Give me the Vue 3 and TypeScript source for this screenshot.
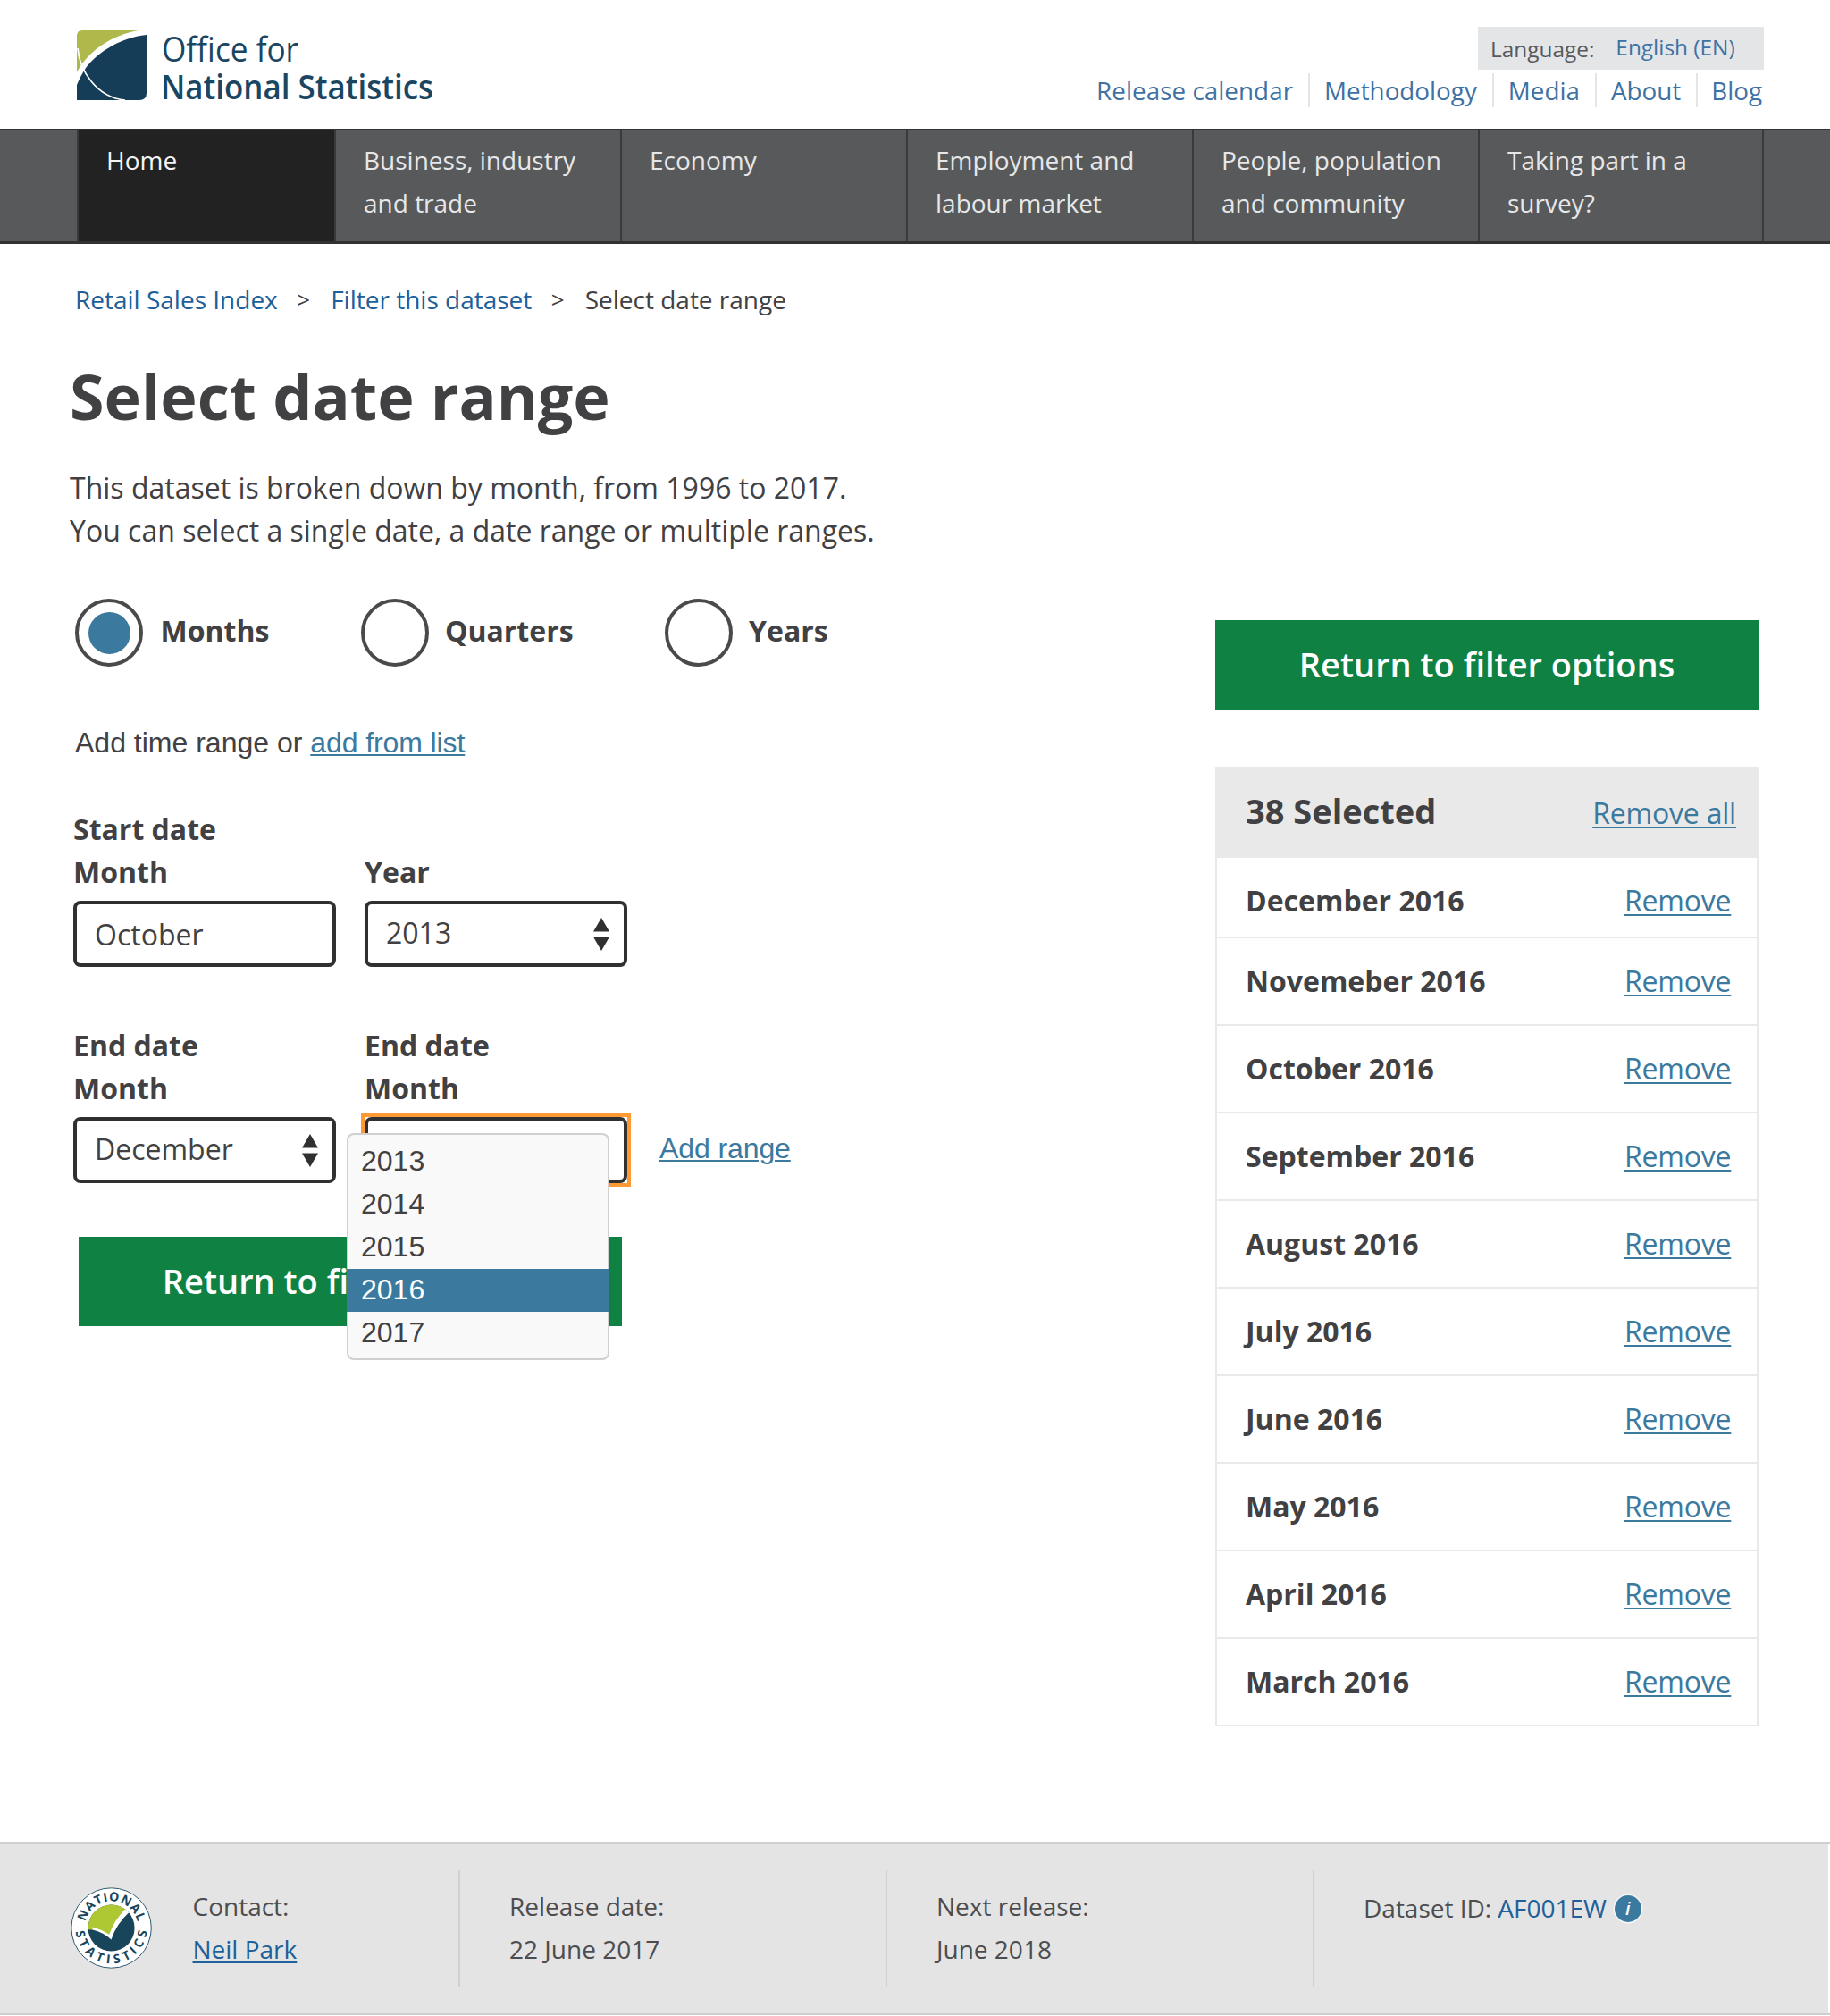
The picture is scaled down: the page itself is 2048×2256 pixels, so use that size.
<script setup lang="ts">
import { ref } from 'vue'

interface NavItem { lines: string[]; active?: boolean }

const navItems: NavItem[] = [
  { lines: ['Home'], active: true },
  { lines: ['Business, industry', 'and trade'] },
  { lines: ['Economy'] },
  { lines: ['Employment and', 'labour market'] },
  { lines: ['People, population', 'and community'] },
  { lines: ['Taking part in a', 'survey?'] },
]
const siteLinks: string[] = ['Release calendar', 'Methodology', 'Media', 'About', 'Blog']
const periods: string[] = ['Months', 'Quarters', 'Years']
const period = ref('Months')
const years: number[] = [2013, 2014, 2015, 2016, 2017]
const endYear = ref(2016)
const selected = ref<string[]>([
  'December 2016', 'Novemeber 2016', 'October 2016', 'September 2016', 'August 2016',
  'July 2016', 'June 2016', 'May 2016', 'April 2016', 'March 2016',
])
</script>

<template>
  <div class="page">
    <header class="masthead">
      <svg class="logo" width="404" height="84" viewBox="0 0 404 84">
        <path d="M0 46V6Q0 0 6 0H69C40 5 14 22 1 45Z" fill="#aeb84b" />
        <path d="M78 5C48 8 18 27 7 47C4 52 2 56 0 61V78H70Q78 78 78 70Z" fill="#163d57" />
        <path d="M1 20C3 45 22 75 54 78" fill="none" stroke="#fff" stroke-width="1.7" />
        <text x="95" y="34.500" font-size="39" font-weight="400" textLength="153" lengthAdjust="spacingAndGlyphs">Office for</text>
        <text x="94" y="77" font-size="38" font-weight="600" textLength="305" lengthAdjust="spacingAndGlyphs">National Statistics</text>
      </svg>
      <div class="tools">
        <div class="language"><span>Language:</span><a class="lang">English (EN)</a></div>
        <div class="site-links"><a v-for="l in siteLinks" :key="l">{{ l }}</a></div>
      </div>
    </header>

    <nav class="nav">
      <a v-for="item in navItems" :key="item.lines[0]" :class="{ active: item.active }">
        <span v-for="line in item.lines" :key="line">{{ line }}</span>
      </a>
    </nav>

    <main class="main">
      <section class="left">
        <div class="crumbs">
          <a>Retail Sales Index</a><i>&gt;</i><a>Filter this dataset</a><i>&gt;</i><span>Select date range</span>
        </div>
        <h1>Select date range</h1>
        <p class="intro">This dataset is broken down by month, from 1996 to 2017.<br>You can select a single date, a date range or multiple ranges.</p>

        <div class="radios">
          <label v-for="p in periods" :key="p" :class="p.toLowerCase()" @click="period = p">
            <span class="radio"><span v-if="p === period" class="dot"></span></span><b>{{ p }}</b>
          </label>
        </div>

        <p class="add">Add time range or <a>add from list</a></p>

        <div class="fields">
          <div class="field">
            <b>Start date</b><b>Month</b>
            <div class="box low"><span>October</span></div>
          </div>
          <div class="field">
            <b>Year</b>
            <div class="box"><span>2013</span>
              <svg class="arrows" width="18" height="38" viewBox="0 0 18 38"><path d="M9 0L18 15.500H0ZM0 21.500H18L9 37Z" /></svg>
            </div>
          </div>
        </div>

        <div class="fields end">
          <div class="field">
            <b>End date</b><b>Month</b>
            <div class="box"><span>December</span>
              <svg class="arrows" width="18" height="38" viewBox="0 0 18 38"><path d="M9 0L18 15.500H0ZM0 21.500H18L9 37Z" /></svg>
            </div>
          </div>
          <div class="field">
            <b>End date</b><b>Month</b>
            <div class="box focus">
              <ul class="menu">
                <li v-for="y in years" :key="y" :class="{ on: y === endYear }" @click="endYear = y">{{ y }}</li>
              </ul>
            </div>
          </div>
          <a class="add-range">Add range</a>
        </div>

        <a class="button left-button">Return to filter options</a>
      </section>

      <aside class="aside">
        <a class="button">Return to filter options</a>
        <div class="panel">
          <div class="panel-head"><h2>38 Selected</h2><a>Remove all</a></div>
          <div v-for="s in selected" :key="s" class="row"><b>{{ s }}</b><a>Remove</a></div>
        </div>
      </aside>
    </main>

    <footer class="footer">
      <div class="footer-in">
        <div class="cell contact">
          <svg class="badge" width="92" height="92" viewBox="0 0 92 92">
            <defs>
              <path id="arc-top" d="M15.600 45.500A30 30 0 0 1 75.600 45.500" />
              <path id="arc-bottom" d="M5.600 45.500A40 40 0 0 0 85.600 45.500" />
              <clipPath id="disc"><circle cx="45.600" cy="45.500" r="26" /></clipPath>
            </defs>
            <circle cx="45.600" cy="45.500" r="44.700" fill="#fff" stroke="#2f5a70" stroke-width="1" />
            <g clip-path="url(#disc)">
              <rect width="92" height="92" fill="#19455a" />
              <path d="M15 47.500Q36 46 45 57Q52 36 66 26V0H0V47Z" fill="#aec834" />
              <path d="M24.500 44.500Q34 47 43.300 52.700Q48 38 61 24.500L68 22L67 26.500Q51 41 45.500 58.500Q37 50.500 24.500 47.500Z" fill="#fff" />
            </g>
            <text class="badge-text"><textPath href="#arc-top" startOffset="7" textLength="80">NATIONAL</textPath></text>
            <text class="badge-text"><textPath href="#arc-bottom" startOffset="4" textLength="118">STATISTICS</textPath></text>
          </svg>
          <div class="lines"><span>Contact:</span><a class="under">Neil Park</a></div>
        </div>
        <div class="cell"><div class="lines"><span>Release date:</span><span>22 June 2017</span></div></div>
        <div class="cell"><div class="lines"><span>Next release:</span><span>June 2018</span></div></div>
        <div class="cell">
          <div class="dataset"><span>Dataset ID:</span><a>AF001EW</a><em class="info">i</em></div>
        </div>
      </div>
    </footer>
  </div>
</template>

<style>
body { margin: 0; background: #fff; }
</style>

<style scoped>
.page { width: 2048px; height: 2256px; overflow: hidden; font-family: "Open Sans", "Noto Sans", sans-serif; font-size: 32px; line-height: 48px; color: #414042; background: #fff; }
h1, h2, p, ul { margin: 0; padding: 0; }
b { font-weight: 700; }

.masthead { box-sizing: border-box; height: 144px; padding: 30px 74px 0 86px; display: flex; justify-content: space-between; align-items: flex-start; }
.logo { margin-top: 4px; fill: #1b4661; overflow: visible; }
.tools { display: flex; flex-direction: column; align-items: flex-end; color: #3f71a3; }
.language { box-sizing: border-box; width: 320px; height: 48px; background: #e4e5e7; display: flex; padding-left: 14px; font-size: 24.400px; line-height: 50px; color: #58595b; }
.lang { margin-left: 24px; line-height: 45px; color: #3f71a3; }
.site-links { display: flex; margin: 4px 2px 0 0; font-size: 27.800px; line-height: 38px; }
.site-links a { padding: 0 17px 0 16px; border-left: 2px solid #e4e5e7; }
.site-links a:first-child { border-left: 0; letter-spacing: 0.050px; }
.site-links a:last-child { padding: 0 0 0 15px; }

.nav { box-sizing: border-box; height: 129px; border-top: 2px solid #323133; border-bottom: 3px solid #323133; background: #58595b; padding-left: 86px; display: flex; font-size: 28px; color: #e6e7e8; }
.nav a { box-sizing: border-box; width: 320px; border-left: 2px solid #3a3a3c; padding: 9px 0 0 31px; display: flex; flex-direction: column; }
.nav a.active { width: 288px; background: #222; color: #f4f4f4; }
.nav a:last-child { border-right: 2px solid #3a3a3c; }

.main { box-sizing: border-box; height: 1788px; display: flex; justify-content: space-between; padding: 38px 80px 0 78px; }
.crumbs { margin-left: 6px; display: flex; font-size: 28px; }
.crumbs a { color: #20609a; }
.crumbs i { font-style: normal; margin: 0 23px 0 21.500px; font-size: 26px; }
h1 { margin-top: 36px; font-size: 70px; line-height: 96px; }
.intro { margin-top: 31px; white-space: nowrap; }
.radios { margin: 52px 0 0 6px; display: flex; height: 76px; }
.radios label { display: flex; align-items: center; gap: 18px; width: 340px; }
.radios .months { gap: 19.500px; width: 320px; }
.radios b { margin-top: -4px; }
.radio { box-sizing: border-box; width: 76px; height: 76px; border: 4px solid #4a4a4c; border-radius: 50%; display: flex; align-items: center; justify-content: center; }
.dot { width: 47px; height: 47px; border-radius: 50%; background: #3b7a9e; }
.add { margin: 61px 0 0 6px; font-family: "Liberation Sans", sans-serif; }
.add a, .add-range { color: #3b7a9e; text-decoration: underline; text-decoration-thickness: 2px; text-underline-offset: 2px; text-decoration-skip-ink: none; letter-spacing: -0.100px; }
.fields { margin: 49px 0 0 4px; display: flex; gap: 32px; align-items: flex-end; }
.fields.end { margin-top: 64px; }
.field { display: flex; flex-direction: column; }
.box { position: relative; box-sizing: border-box; width: 294px; height: 74px; margin-top: 8px; border: 4px solid #303030; border-radius: 8px; padding: 8px 16px 0 20px; display: flex; justify-content: space-between; align-items: flex-start; }
.box.low { padding-top: 10px; }
.arrows { margin-top: 7px; fill: #303030; }
.focus::before { content: ""; position: absolute; inset: -8px; border: 4px solid #f93; }
.menu { position: absolute; left: -24px; top: 14px; z-index: 2; box-sizing: border-box; width: 294px; height: 254px; border: 2px solid #d0d0d0; border-radius: 8px; background: #f9f9f9; list-style: none; padding-top: 6px; font-family: "Liberation Sans", sans-serif; }
.menu li { box-sizing: border-box; height: 48px; line-height: 46px; margin: 0 -2px; padding-left: 16px; }
.menu .on { background: #3b7a9e; color: #fff; }
.add-range { font-family: "Liberation Sans", sans-serif; margin: 0 0 15px 4px; text-decoration-skip-ink: auto; }
.button { display: block; box-sizing: border-box; width: 608px; height: 100px; background: #0f8243; color: #fff; font-size: 38px; font-weight: 600; line-height: 98px; text-align: center; }
.left-button { margin: 60px 0 0 10px; }

.aside { width: 608px; padding-top: 383px; }
.panel { margin-top: 64px; }
.panel-head { display: flex; justify-content: space-between; align-items: baseline; height: 102px; box-sizing: border-box; background: #e9e9e9; padding: 25px 25px 0 34px; }
.panel h2 { font-size: 38px; line-height: 48px; }
.panel a { color: #3b7a9e; text-decoration: underline; text-decoration-thickness: 2px; text-underline-offset: 3px; letter-spacing: -0.200px; }
.row { display: flex; justify-content: space-between; box-sizing: border-box; height: 98px; padding: 24px 28.700px 0 32px; border: 2px solid #e9e9e9; border-top: 0; }
.panel-head + .row { height: 90px; }

.footer { box-sizing: border-box; height: 194px; border-top: 2px solid #cfcfcf; border-bottom: 2px solid #cfcfcf; font-size: 28px; }
.footer-in { box-sizing: border-box; width: 2046px; height: 190px; background: #e4e4e4; display: flex; padding: 30px 0 30px 78px; color: #4d4d4f; }
.cell { box-sizing: border-box; width: 478px; height: 130px; border-left: 2px solid #d0d0d0; padding: 16px 0 0 55px; }
.cell.contact { width: 435px; border-left: 0; padding-left: 0; display: flex; }
.badge { margin: 3px 0 0 0.500px; }
.badge-text { font-size: 14px; font-weight: 700; fill: #19455a; }
.lines { display: flex; flex-direction: column; align-items: flex-start; }
.contact .lines { margin-left: 45px; }
.footer a { color: #20609a; }
.under { text-decoration: underline; text-decoration-thickness: 2px; text-underline-offset: 3px; }
.dataset { display: flex; margin-top: 2px; }
.dataset a { margin-left: 7px; }
.info { width: 30px; height: 30px; margin: 10px 0 0 9px; border-radius: 50%; background: #3b7a9e; box-shadow: 0 0 0 1.500px #f4f6f8; color: #fff; font-size: 20px; font-weight: 600; line-height: 29px; text-align: center; }
</style>
